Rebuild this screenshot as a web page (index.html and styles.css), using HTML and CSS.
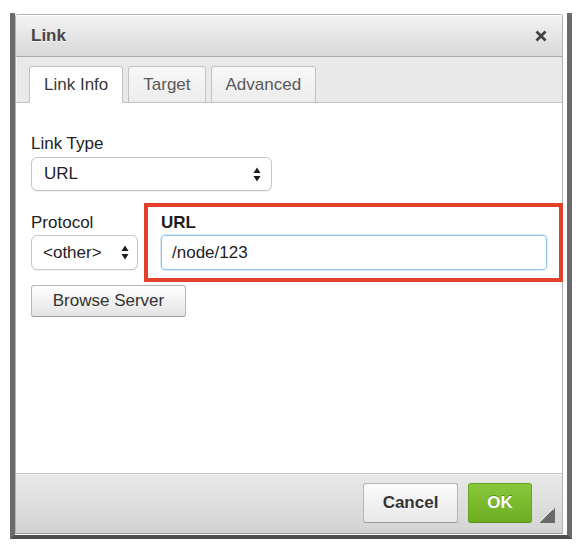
FILE: index.html
```html
<!DOCTYPE html>
<html>
<head>
<meta charset="utf-8">
<title>Link</title>
<link rel="stylesheet" href="styles.css">
</head>
<body>
<div class="frame">
  <div class="dialog">
    <div class="title">
      <span class="title-text">Link</span>
      <svg class="close" width="12" height="12" viewBox="0 0 12 12"><path d="M1.5 1.5 L10.5 10.5 M10.5 1.5 L1.5 10.5" stroke="#424242" stroke-width="2.8" fill="none"/></svg>
    </div>
    <div class="tabs">
      <div class="tab active">Link Info</div>
      <div class="tab">Target</div>
      <div class="tab">Advanced</div>
    </div>
    <div class="contents">
      <div class="label">Link Type</div>
      <div class="select select-type">
        <span>URL</span>
        <svg class="arrows" width="8" height="15" viewBox="0 0 8 15"><polygon points="0.5,6 4,0.5 7.5,6" fill="#1a1a1a"/><polygon points="0.5,9 4,14.5 7.5,9" fill="#1a1a1a"/></svg>
      </div>
      <div class="row">
        <div class="col-protocol">
          <div class="label">Protocol</div>
          <div class="select select-proto">
            <span>&lt;other&gt;</span>
            <svg class="arrows" width="8" height="15" viewBox="0 0 8 15"><polygon points="0.5,6 4,0.5 7.5,6" fill="#1a1a1a"/><polygon points="0.5,9 4,14.5 7.5,9" fill="#1a1a1a"/></svg>
          </div>
        </div>
        <div class="url-box">
          <div class="label bold">URL</div>
          <div class="input">/node/123</div>
        </div>
      </div>
      <div class="btn browse">Browse Server</div>
    </div>
    <div class="footer">
      <div class="btn cancel">Cancel</div>
      <div class="btn ok">OK</div>
      <div class="grip"></div>
    </div>
  </div>
</div>
</body>
</html>
```
FILE: styles.css
```css
* { box-sizing: border-box; }
body {
  margin: 0;
  background: #fff;
  font-family: "Liberation Sans", Arial, Helvetica, sans-serif;
  font-size: 17px;
  color: #262626;
}
.frame {
  margin: 13px 0 0 10px;
  width: 562px;
  border-left: 5px solid #6b6b6b;
  border-right: 5px solid #6b6b6b;
  border-bottom: 4px solid #4f4f4f;
  padding: 1px 4px 1px 0;
  background: #fff;
}
.dialog {
  width: 548px;
  border: 1px solid #b4b4b4;
  border-bottom-color: #9a9a9a;
  border-radius: 3px 3px 0 0;
  background: #e9e9e9;
}
.title {
  height: 42px;
  display: flex;
  align-items: center;
  justify-content: space-between;
  padding: 0 15px 0 15px;
  background: linear-gradient(#f3f3f3, #d7d8d7);
  border-bottom: 1px solid #ababab;
  box-shadow: inset 0 1px 0 #fff;
  border-radius: 2px 2px 0 0;
}
.title-text {
  font-weight: bold;
  font-size: 17px;
  color: #454545;
  text-shadow: 0 1px 0 rgba(255,255,255,.75);
}
.close { display: block; }
.tabs {
  height: 45px;
  display: flex;
  align-items: flex-end;
  padding-left: 13px;
  box-shadow: inset 1px 0 0 #f6f6f6;
}
.tab {
  position: relative;
  z-index: 1;
  height: 37px;
  margin-bottom: -1px;
  margin-right: 5px;
  padding: 0 14px;
  line-height: 35px;
  border: 1px solid #c2c2c2;
  border-radius: 3px 3px 0 0;
  background: linear-gradient(#f8f8f8, #ececec);
  color: #595959;
}
.tab.active {
  background: #fff;
  border-bottom-color: #fff;
  color: #383838;
}
.contents {
  height: 371px;
  background: #fff;
  border-top: 1px solid #c2c2c2;
  padding: 31px 0 0 15px;
}
.label {
  height: 20px;
  line-height: 20px;
  color: #222;
}
.label.bold { font-weight: bold; color: #1e1e1e; }
.select {
  display: flex;
  align-items: center;
  background: #fff;
  border: 1px solid #c6c6c6;
  border-radius: 6px;
  box-shadow: 0 1px 1px rgba(0,0,0,.06);
  color: #1e1e1e;
  line-height: 20px;
}
.select .arrows { margin-left: auto; display: block; }
.select-type {
  width: 241px;
  height: 34px;
  margin-top: 3px;
  padding-left: 12px;
}
.select-type .arrows { margin-right: 10px; }
.select-proto {
  width: 107px;
  height: 35px;
  margin-top: 2px;
  padding-left: 11px;
}
.select-proto .arrows { margin-right: 8px; }
.row {
  display: flex;
  align-items: flex-start;
  margin-top: 12px;
}
.col-protocol {
  width: 107px;
  margin-top: 10px;
  margin-right: 6px;
}
.url-box {
  flex: 1;
  margin-right: -1px;
  border: 4px solid #e5402b;
  padding: 6px 12px 8px 13px;
}
.input {
  height: 35px;
  margin-top: 2px;
  border: 1px solid #8fc3ee;
  border-radius: 4px;
  box-shadow: 0 0 0 1px rgba(150,200,240,.35);
  padding-left: 10px;
  line-height: 33px;
  color: #1e1e1e;
}
.btn {
  display: flex;
  align-items: center;
  justify-content: center;
  border: 1px solid #b6b6b6;
  border-bottom-color: #9c9c9c;
  border-radius: 3px;
  background: linear-gradient(#ffffff, #e4e4e4);
  color: #333;
}
.browse {
  width: 155px;
  height: 32px;
  margin-top: 3px;
}
.footer {
  height: 60px;
  display: flex;
  justify-content: flex-end;
  align-items: flex-end;
  padding: 10px 7px 10px 0;
  border-top: 1px solid #c2c2c2;
  box-shadow: inset 0 1px 0 #f4f4f4;
  background: linear-gradient(#e9e9e9, #d2d3d2);
}
.cancel {
  width: 95px;
  height: 40px;
  font-weight: bold;
  color: #333;
  text-shadow: 0 1px 0 #fff;
  background: linear-gradient(#fbfbfb, #e8e8e8);
}
.ok {
  width: 64px;
  height: 40px;
  margin-left: 10px;
  font-weight: bold;
  color: #fff;
  text-shadow: 0 -1px 0 #5a8a14;
  border-color: #67a51c #67a51c #56901a;
  background: linear-gradient(#89c73c, #6cad22);
}
.grip {
  width: 15px;
  height: 15px;
  margin-left: 8px;
  background: linear-gradient(135deg, transparent 50%, #6a6a6a 50%);
}
```
